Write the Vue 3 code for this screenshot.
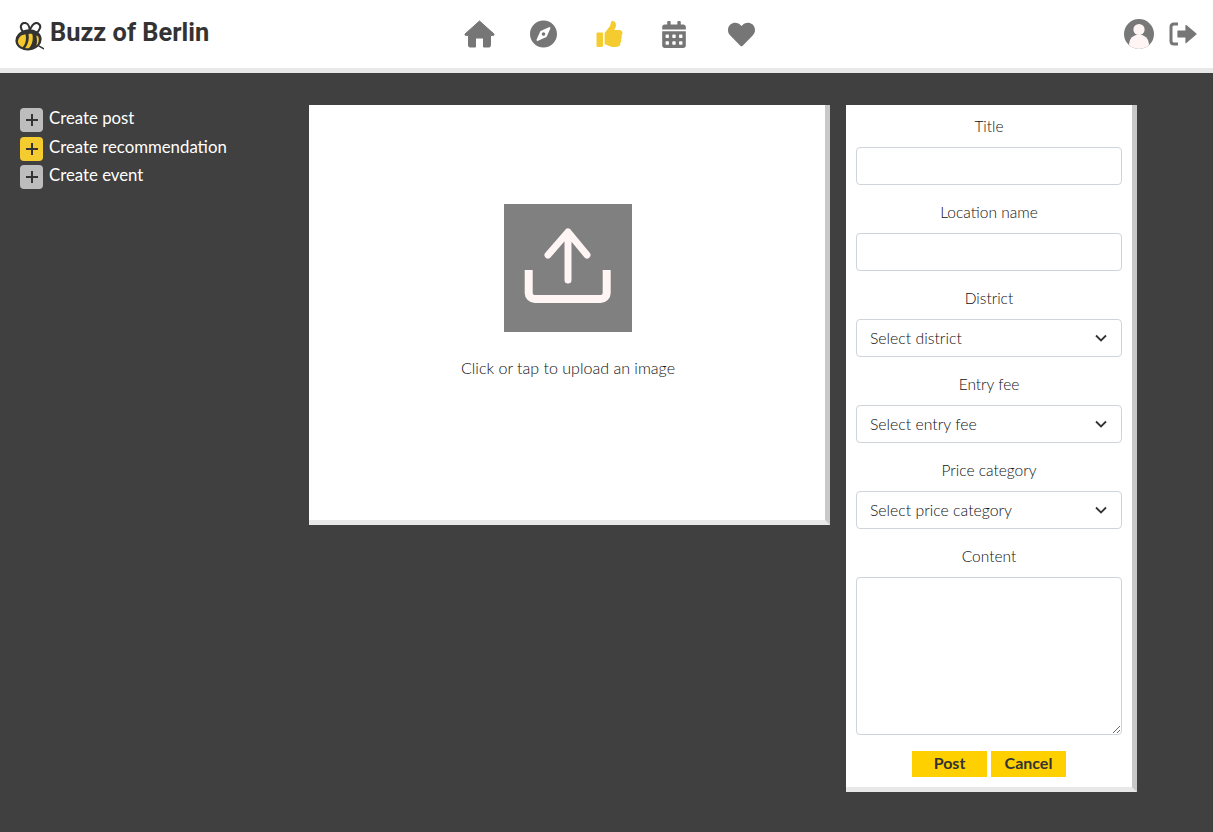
<template>
  <div class="page">
    <header class="topbar">
      <div class="brand">
        <svg class="bee" viewBox="0 0 30 30">
          <path d="M9 11 C4 6 6 0.5 10.5 1 C14 1.5 15.5 6 15 11" fill="#fff" stroke="#333" stroke-width="2.2" />
          <path d="M15 11 C15.5 5 20 -0.5 24 1.5 C28 3.5 26 9 20.5 13" fill="#fff" stroke="#333" stroke-width="2.2" />
          <ellipse cx="14" cy="18.5" rx="13.6" ry="10.8" transform="rotate(-8 14 18.5)" fill="#333" />
          <path d="M3 20 C4 15 7 13 11 13 C12 18 11 23 8 26 C5 25.5 3 23 3 20 Z" fill="#f4c92f" />
          <path d="M14 12.5 C16 12 17 12.2 18 12.6 C19 18 18 23 14.5 27 C13 27.3 12 27.2 10.5 27 C13.5 23 15 18 14 12.5 Z" fill="#f4c92f" />
          <path d="M24 15 C25.5 19 24 23 22 24.5 C23 21 23 18 22 14 Z" fill="#f4c92f" />
          <path d="M25 25 L29.5 27.5" stroke="#333" stroke-width="1.6" stroke-linecap="round" />
        </svg>
        <span class="brand-name">Buzz of Berlin</span>
      </div>
      <nav class="nav">
        <svg class="icon home" viewBox="0 0 31 28">
          <path d="M15.5 1 L30 14 Q30.6 15.5 28.5 15.5 H26.5 V25.5 Q26.5 27 25 27 H19.5 V18 H11.5 V27 H6 Q4.5 27 4.5 25.5 V15.5 H2.5 Q.4 15.5 1 14 Z" stroke="#767676" stroke-width="1" stroke-linejoin="round" />
        </svg>
        <svg class="icon compass" viewBox="0 0 496 512">
          <path d="M225.38 233.37c-12.5 12.5-12.5 32.76 0 45.25 12.49 12.5 32.76 12.5 45.25 0 12.5-12.5 12.5-32.76 0-45.25-12.5-12.49-32.76-12.49-45.25 0zM248 8C111.03 8 0 119.03 0 256s111.03 248 248 248 248-111.03 248-248S384.97 8 248 8zm126.14 148.05L308.17 300.4a31.938 31.938 0 0 1-15.77 15.77l-144.34 65.97c-16.65 7.61-33.81-9.55-26.2-26.2l65.98-144.35a31.938 31.938 0 0 1 15.77-15.77l144.34-65.97c16.65-7.6 33.8 9.55 26.19 26.2z" />
        </svg>
        <svg class="icon thumb" viewBox="0 0 512 512">
          <path d="M104 224H24c-13.255 0-24 10.745-24 24v240c0 13.255 10.745 24 24 24h80c13.255 0 24-10.745 24-24V248c0-13.255-10.745-24-24-24zM384 81.452c0 42.416-25.97 66.208-33.277 94.548h101.723c33.397 0 59.397 27.746 59.553 58.098.084 17.938-7.546 37.249-19.439 49.197l-.11.11c9.836 23.337 8.237 56.037-9.308 79.469 8.681 25.895-.069 57.704-16.382 74.757 4.298 17.598 2.244 32.575-6.148 44.632C440.202 511.587 389.616 512 346.839 512l-2.845-.001c-48.287-.017-87.806-17.598-119.56-31.725-15.957-7.099-36.821-15.887-52.651-16.178-6.54-.12-11.783-5.457-11.783-11.998v-213.77c0-3.2 1.282-6.271 3.558-8.521 39.614-39.144 56.648-80.587 89.117-113.111 14.804-14.832 20.188-37.236 25.393-58.902C282.515 39.293 291.817 0 312 0c24 0 72 8 72 81.452z" />
        </svg>
        <svg class="icon calendar" viewBox="0 0 448 512">
          <path d="M0 464c0 26.5 21.5 48 48 48h352c26.5 0 48-21.5 48-48V192H0v272zm320-196c0-6.6 5.4-12 12-12h40c6.6 0 12 5.4 12 12v40c0 6.6-5.4 12-12 12h-40c-6.6 0-12-5.4-12-12v-40zm0 128c0-6.6 5.4-12 12-12h40c6.6 0 12 5.4 12 12v40c0 6.6-5.4 12-12 12h-40c-6.6 0-12-5.4-12-12v-40zM192 268c0-6.6 5.4-12 12-12h40c6.6 0 12 5.4 12 12v40c0 6.6-5.4 12-12 12h-40c-6.6 0-12-5.4-12-12v-40zm0 128c0-6.6 5.4-12 12-12h40c6.6 0 12 5.4 12 12v40c0 6.6-5.4 12-12 12h-40c-6.6 0-12-5.4-12-12v-40zM64 268c0-6.6 5.4-12 12-12h40c6.6 0 12 5.4 12 12v40c0 6.6-5.4 12-12 12H76c-6.6 0-12-5.4-12-12v-40zm0 128c0-6.6 5.4-12 12-12h40c6.6 0 12 5.4 12 12v40c0 6.6-5.4 12-12 12H76c-6.6 0-12-5.4-12-12v-40zM400 64h-48V16c0-8.8-7.2-16-16-16h-32c-8.8 0-16 7.2-16 16v48H160V16c0-8.8-7.2-16-16-16h-32c-8.8 0-16 7.2-16 16v48H48C21.5 64 0 85.5 0 112v48h448v-48c0-26.5-21.5-48-48-48z" />
        </svg>
        <svg class="icon heart" viewBox="0 0 512 512">
          <path d="M462.3 62.6C407.5 15.9 326 24.3 275.7 76.2L256 96.5l-19.7-20.3C186.1 24.3 104.5 15.9 49.7 62.6c-62.8 53.6-66.1 149.8-9.9 207.9l193.5 199.8c12.5 12.9 32.8 12.9 45.3 0l193.5-199.8c56.3-58.1 53-154.3-9.8-207.9z" />
        </svg>
      </nav>
      <div class="account">
        <svg class="avatar" viewBox="0 0 30 30">
          <defs>
            <clipPath id="avatar-clip"><circle cx="15" cy="15" r="15" /></clipPath>
          </defs>
          <circle cx="15" cy="15" r="15" fill="#787878" />
          <g clip-path="url(#avatar-clip)" fill="#fff5f5">
            <circle cx="15" cy="10.5" r="5.6" />
            <ellipse cx="15" cy="25" rx="10" ry="9.5" />
          </g>
        </svg>
        <svg class="icon logout" viewBox="0 0 28 24">
          <path d="M9 2 H5 Q2 2 2 5 V19 Q2 22 5 22 H9" fill="none" stroke="#767676" stroke-width="3" />
          <path d="M9 9 H17 V3.5 L27 12 L17 20.5 V15 H9 Z" stroke="#767676" stroke-width="1.2" stroke-linejoin="round" />
        </svg>
      </div>
    </header>

    <main class="content">
      <aside class="actions">
        <div v-for="action in actions" :key="action.label" class="action">
          <span class="plus" :class="{ active: action.active }">
            <svg viewBox="0 0 12 12"><path d="M6 0v12M0 6h12" /></svg>
          </span>
          <span>{{ action.label }}</span>
        </div>
      </aside>

      <section class="card upload">
        <div class="upload-box">
          <svg viewBox="0 0 128 128">
            <path class="tray" d="M24.7 66v23a6 6 0 0 0 6 6h66a6 6 0 0 0 6-6V66" />
            <path d="M64 76V28M44 51l20-23 19 23" />
          </svg>
        </div>
        <p>Click or tap to upload an image</p>
      </section>

      <form class="card form">
        <template v-for="field in fields" :key="field.label">
          <label class="label">{{ field.label }}</label>
          <input v-if="field.type === 'input'" class="control" type="text" />
          <div v-else-if="field.type === 'select'" class="select-wrap">
            <select class="control select">
              <option>{{ field.placeholder }}</option>
            </select>
            <svg class="chevron" viewBox="0 0 12 8"><path d="M1 1.5l5 5 5-5" /></svg>
          </div>
          <textarea v-else class="control area"></textarea>
        </template>
        <div class="buttons">
          <button type="button" class="btn">Post</button>
          <button type="button" class="btn">Cancel</button>
        </div>
      </form>
    </main>
  </div>
</template>

<script setup>
const actions = [
  { label: 'Create post', active: false },
  { label: 'Create recommendation', active: true },
  { label: 'Create event', active: false }
];

const fields = [
  { label: 'Title', type: 'input' },
  { label: 'Location name', type: 'input' },
  { label: 'District', type: 'select', placeholder: 'Select district' },
  { label: 'Entry fee', type: 'select', placeholder: 'Select entry fee' },
  { label: 'Price category', type: 'select', placeholder: 'Select price category' },
  { label: 'Content', type: 'area' }
];
</script>

<style>
html,
body {
  margin: 0;
  background: #404040;
}
</style>

<style scoped>
.page {
  min-height: 100vh;
  background: #404040;
  font-family: "Lato", "Liberation Sans", sans-serif;
  color: #333;
  overflow: hidden;
}

.topbar {
  display: flex;
  align-items: center;
  height: 68px;
  background: #fff;
  border-bottom: 5px solid #e8e8e8;
}

.brand {
  display: flex;
  align-items: center;
  gap: 6px;
  width: 449px;
  padding-left: 15px;
  margin-top: -4px;
}

.bee {
  width: 29px;
  height: 29px;
  margin-top: 8px;
}

.brand-name {
  font-family: "Roboto", sans-serif;
  font-weight: 700;
  font-size: 25.4px;
  color: #333;
  margin-top: -1px;
}

.nav {
  display: flex;
  align-items: center;
}

.icon {
  fill: #767676;
  display: block;
}

.home {
  width: 31px;
  height: 28px;
}

.compass {
  width: 27px;
  height: 28px;
  margin-left: 35px;
}

.thumb {
  width: 27px;
  height: 26px;
  margin-left: 39px;
  fill: #f4cc30;
}

.calendar {
  width: 24px;
  height: 27px;
  margin-left: 39px;
}

.heart {
  width: 27px;
  height: 27px;
  margin-left: 42px;
}

.account {
  display: flex;
  align-items: center;
  gap: 15px;
  margin-left: auto;
  padding-right: 16px;
}

.avatar {
  width: 30px;
  height: 30px;
}

.logout {
  width: 28px;
  height: 24px;
}

.content {
  display: flex;
  align-items: flex-start;
  padding-top: 32px;
}

.actions {
  width: 289px;
  padding-left: 20px;
  color: #fff;
  font-size: 16.8px;
}

.action {
  display: flex;
  align-items: flex-start;
  gap: 6px;
  height: 28.5px;
  line-height: 26px;
}

.plus {
  display: flex;
  align-items: center;
  justify-content: center;
  width: 23px;
  height: 24px;
  margin-top: 3px;
  border-radius: 4px;
  background: #bdbdbd;
}

.plus.active {
  background: #f4cc30;
}

.plus svg {
  width: 12px;
  height: 12px;
  fill: none;
  stroke: #333;
  stroke-width: 2;
}

.card {
  box-sizing: border-box;
  background: #fff;
  border-right: 5px solid #c8c8c8;
  border-bottom: 5px solid #e8e8e8;
}

.upload {
  display: flex;
  flex-direction: column;
  align-items: center;
  width: 521px;
  height: 420px;
  padding-top: 99px;
  padding-left: 2px;
}

.upload-box {
  width: 128px;
  height: 128px;
  background: #808080;
}

.upload-box svg {
  display: block;
  fill: none;
  stroke: #fff5f5;
  stroke-width: 7;
  stroke-linecap: round;
  stroke-linejoin: round;
}

.upload-box .tray {
  stroke-width: 8;
  stroke-linecap: butt;
}

.upload p {
  margin: 26px 0 0;
  font-size: 16.05px;
  font-weight: 300;
  line-height: 20px;
  color: #111;
}

.form {
  display: flex;
  flex-direction: column;
  width: 291px;
  height: 687px;
  margin-left: 16px;
  padding: 0 10px;
}

.label {
  display: block;
  height: 42px;
  line-height: 43px;
  text-align: center;
  font-size: 15.5px;
  font-weight: 300;
  color: #111;
}

.control {
  box-sizing: border-box;
  display: block;
  width: 100%;
  height: 38px;
  border: 1px solid #ced4da;
  border-radius: 4px;
  background: #fff;
  font: inherit;
  font-size: 15.8px;
  font-weight: 300;
  color: #111;
  outline: none;
}

.control + .label,
.select-wrap + .label {
  margin-top: 6px;
}

.select-wrap {
  position: relative;
}

.select {
  padding: 0 30px 2px 13px;
  appearance: none;
}

.chevron {
  position: absolute;
  right: 15px;
  top: 15px;
  width: 12px;
  height: 8px;
  fill: none;
  stroke: #333;
  stroke-width: 1.8;
  pointer-events: none;
}

.area {
  height: 158px;
  resize: vertical;
}

.buttons {
  display: flex;
  justify-content: center;
  gap: 4px;
  margin-top: 16px;
}

.btn {
  width: 75px;
  height: 26px;
  padding: 0 0 3px;
  border: none;
  background: #ffd000;
  font: inherit;
  font-size: 16px;
  font-weight: 700;
  color: #333;
}
</style>
